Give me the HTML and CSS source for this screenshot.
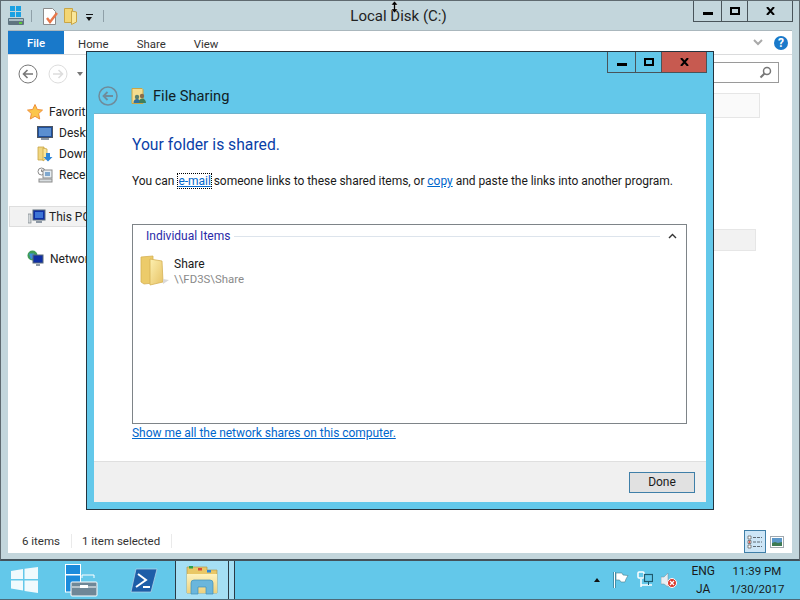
FILE: index.html
```html
<!DOCTYPE html>
<html lang="en">
<head>
  <meta charset="UTF-8">
  <title>File Sharing</title>
  <link rel="stylesheet" href="styles.css">
</head>
<body>

<svg class="defs" width="0" height="0">
  <defs>
    <linearGradient id="fold" x1="0" y1="0" x2="1" y2="1">
      <stop offset="0" stop-color="#fdf0b0"/>
      <stop offset="1" stop-color="#e6c265"/>
    </linearGradient>
    <linearGradient id="tile" x1="0" y1="0" x2="0" y2="1">
      <stop offset="0" stop-color="#fdf2bd"/>
      <stop offset="1" stop-color="#eed27e"/>
    </linearGradient>
  </defs>
</svg>

<div class="desktop">

  <div class="explorer">
    <div class="titlebar">
      <div class="qat">
        <svg class="qat-drive" width="18" height="20" viewBox="0 0 18 20">
          <rect x="3" y="0" width="5" height="5" fill="#1ba1e2"/><rect x="9" y="0" width="5" height="5" fill="#1ba1e2"/>
          <rect x="3" y="6" width="5" height="5" fill="#1ba1e2"/><rect x="9" y="6" width="5" height="5" fill="#1ba1e2"/>
          <rect x="1" y="12" width="16" height="7" rx="1" fill="#5f7480"/><rect x="2" y="13" width="14" height="2" fill="#a9bcc5"/>
          <rect x="12" y="16" width="3" height="2" fill="#5ecb3c"/>
        </svg>
        <span class="qat-sep"></span>
        <svg class="qat-props" width="16" height="17" viewBox="0 0 16 17">
          <path d="M1.500.5h9l3 3v13h-12z" fill="#fff" stroke="#8b8b8b"/>
          <path d="M5 10l3 4 7-9" fill="none" stroke="#e8774a" stroke-width="2.400"/>
        </svg>
        <svg class="qat-folder" width="14" height="17" viewBox="0 0 14 17">
          <path d="M.5.5h8v14h-8z" fill="#f3d675" stroke="#c9a545"/>
          <path d="M7.500 3l5 1v10l-5 2.500z" fill="#f9e69a" stroke="#c9a545"/>
        </svg>
        <span class="qat-menu"></span>
        <span class="qat-sep qat-sep-end"></span>
      </div>
      <div class="title">Local Disk (C:)</div>
      <div class="caption caption-main">
        <span class="cap-btn cap-min"><i></i></span>
        <span class="cap-btn cap-max"><i></i></span>
        <span class="cap-btn cap-close"><svg width="9" height="8" viewBox="0 0 9 8"><path d="M1 0l7 8M8 0L1 8" stroke="#000" stroke-width="2"/></svg></span>
      </div>
    </div>

    <div class="pane">
      <div class="ribbon">
        <span class="tab tab-file">File</span>
        <span class="tab tab-home">Home</span>
        <span class="tab tab-share">Share</span>
        <span class="tab tab-view">View</span>
        <span class="ribbon-end">
          <svg width="10" height="7" viewBox="0 0 10 7"><path d="M1 1l4 4 4-4" fill="none" stroke="#a9a9a9" stroke-width="2"/></svg>
          <span class="help">?</span>
        </span>
      </div>

      <div class="addressrow">
        <svg width="20" height="20" viewBox="0 0 20 20"><circle cx="10" cy="10" r="9" fill="#fff" stroke="#777"/><path d="M15 10H6M9.500 6L5.500 10l4 4" fill="none" stroke="#777" stroke-width="1.600"/></svg>
        <svg class="nav-forward" width="20" height="20" viewBox="0 0 20 20"><circle cx="10" cy="10" r="9" fill="#fff" stroke="#ddd"/><path d="M5 10h9M10.500 6l4 4-4 4" fill="none" stroke="#ddd" stroke-width="1.600"/></svg>
        <span class="nav-drop"></span>
        <span class="searchbox">
          <svg width="13" height="13" viewBox="0 0 13 13"><circle cx="8" cy="5" r="3.500" fill="none" stroke="#777" stroke-width="1.500"/><path d="M5.500 7.500L1.500 11.500" stroke="#777" stroke-width="2"/></svg>
        </span>
      </div>

      <div class="body">
        <div class="nav">
          <div class="nav-item nav-fav">
            <svg width="16" height="16" viewBox="0 0 16 16"><path d="M8 .5l2.300 5 5.200.6-3.900 3.500 1.100 5.400L8 12.300 3.300 15l1.100-5.400L.5 6.100l5.200-.6z" fill="#fbc64b" stroke="#ef8f3a"/></svg>
            <span>Favorit</span>
          </div>
          <div class="nav-item nav-sub">
            <svg width="16" height="14" viewBox="0 0 16 14"><rect x=".5" y=".5" width="15" height="11" fill="#1f4f9c" stroke="#4b5563"/><rect x="2" y="2" width="12" height="8" fill="#5b8fd0"/><rect x="4" y="12" width="8" height="2" fill="#8d98a5"/></svg>
            <span>Deskt</span>
          </div>
          <div class="nav-item nav-sub">
            <svg width="16" height="16" viewBox="0 0 16 16"><path d="M1 1h6v13H1z" fill="#f0d680" stroke="#c9a545" stroke-width=".8"/><path d="M6 2l4 1v9l-4 3z" fill="#f9e69a" stroke="#c9a545" stroke-width=".8"/><path d="M9 7h4v4h2.500L11 15.500 6.500 11H9z" fill="#2d86d8"/></svg>
            <span>Down</span>
          </div>
          <div class="nav-item nav-sub">
            <svg width="16" height="16" viewBox="0 0 16 16"><circle cx="4.500" cy="4.500" r="3.500" fill="#fff" stroke="#8b8b8b"/><path d="M4.500 2.500v2h2" fill="none" stroke="#666" stroke-width=".8"/><rect x="6" y="3" width="9" height="8" fill="#e6edf2" stroke="#8b8b8b"/><rect x="8" y="5" width="5" height="4" fill="#7fa8cf"/><rect x="2" y="12" width="13" height="3" fill="#d8dde0" stroke="#8b8b8b"/></svg>
            <span>Recer</span>
          </div>
          <div class="nav-item nav-pc">
            <svg width="18" height="16" viewBox="0 0 18 16"><rect x="0" y="5" width="3" height="9" fill="#d4d8da" stroke="#7d868c" stroke-width=".7"/><rect x="5" y="1" width="12" height="10" fill="#0f2fa5" stroke="#5a6a78"/><rect x="7" y="3" width="8" height="6" fill="#3d74d6"/><rect x="8" y="12" width="6" height="2" fill="#8d98a5"/></svg>
            <span>This PC</span>
          </div>
          <div class="nav-item nav-net">
            <svg width="17" height="17" viewBox="0 0 17 17"><circle cx="5.500" cy="5.500" r="5" fill="#3f9c57"/><path d="M2 3.500h5l1 3-4 3z" fill="#3d8fd8"/><rect x="6" y="5" width="10" height="8" fill="#0f2fa5" stroke="#5a6a78"/><rect x="9" y="14" width="4" height="2" fill="#8d98a5"/></svg>
            <span>Networ</span>
          </div>
        </div>
        <div class="ghosts">
          <span class="ghost ghost-top"></span>
          <span class="ghost ghost-row"></span>
        </div>
      </div>

      <div class="statusbar">
        <span class="status-cell">6 items</span>
        <span class="status-cell">1 item selected</span>
        <span class="viewbtns">
          <span class="viewbtn viewbtn-on">
            <svg width="16" height="14" viewBox="0 0 16 14"><path d="M1 1h3v3H1zM1 5.500h3v3H1zM1 10h3v3H1z" fill="#fff" stroke="#555" stroke-width=".7"/><rect x="1.700" y="6.200" width="1.600" height="1.600" fill="#d9362a"/><path d="M6 2.500h9M6 7h9M6 11.500h9" stroke="#5f6b75" stroke-dasharray="3 1"/></svg>
          </span>
          <span class="viewbtn viewbtn-thumb">
            <svg width="14" height="12" viewBox="0 0 14 12"><rect x=".5" y=".5" width="13" height="11" fill="#fff" stroke="#a0a8ae"/><rect x="2" y="2" width="10" height="8" fill="#5b97c9"/><path d="M2 10V7l3-1 3 1 4-1v4z" fill="#3d7a52"/></svg>
          </span>
        </span>
      </div>
    </div>
  </div>

  <div class="dialog">
    <div class="caption caption-dialog">
      <span class="cap-btn cap-min"><i></i></span>
      <span class="cap-btn cap-max"><i></i></span>
      <span class="cap-btn cap-close cap-red"><svg width="9" height="8" viewBox="0 0 9 8"><path d="M1 0l7 8M8 0L1 8" stroke="#000" stroke-width="2"/></svg></span>
    </div>
    <div class="dialog-head">
      <svg width="20" height="20" viewBox="0 0 20 20"><circle cx="10" cy="10" r="9" fill="none" stroke="#6f8c9b" stroke-width="1.500"/><path d="M15 10H6M9.500 6L5.500 10l4 4" fill="none" stroke="#6f8c9b" stroke-width="1.800"/></svg>
      <svg class="share-icon" width="16" height="16" viewBox="0 0 16 16">
        <path d="M1 .5h10l1 1v14H1z" fill="#f4dc8f" stroke="#c9a545"/>
        <circle cx="6" cy="9" r="2.200" fill="#5b7f6e"/><path d="M2.500 15c0-3 1.500-4 3.500-4s3.500 1 3.500 4z" fill="#2f6f9f"/>
        <circle cx="11" cy="8" r="2.200" fill="#8a6d4b"/><path d="M8 15c0-3 1-4.500 3-4.500s4 1.500 4 4.500z" fill="#3c7f5f"/>
      </svg>
      <span class="dialog-title">File Sharing</span>
    </div>
    <div class="dialog-body">
      <div class="dialog-main">
        <h1 class="heading">Your folder is shared.</h1>
        <p class="intro">You can <a class="link link-focus">e-mail</a> someone links to these shared items, or <a class="link">copy</a> and paste the links into another program.</p>
        <div class="itembox">
          <div class="group-head">
            <span class="group-label">Individual Items</span>
            <span class="group-line"></span>
            <svg width="9" height="6" viewBox="0 0 9 6"><path d="M1 5l3.500-3.500L8 5" fill="none" stroke="#333" stroke-width="1.400"/></svg>
          </div>
          <div class="item">
            <svg width="32" height="32" viewBox="0 0 32 32">
              <path d="M1 2l12-1v27l-9 1-3-2z" fill="#eccb6a" stroke="#d6b154" stroke-width=".8"/>
              <path d="M10 4l12 2 1 21-13 3z" fill="url(#fold)" stroke="#d6b154" stroke-width=".8"/>
              <path d="M23 24l6 1-6 4z" fill="#d9d9d9"/>
            </svg>
            <div class="item-text">
              <div class="item-name">Share</div>
              <div class="item-path">\\FD3S\Share</div>
            </div>
          </div>
        </div>
        <a class="link link-shares">Show me all the network shares on this computer.</a>
      </div>
      <div class="dialog-foot">
        <button class="done" type="button">Done</button>
      </div>
    </div>
  </div>

  <div class="taskbar">
    <svg class="start" width="28" height="26" viewBox="0 0 28 26">
      <path d="M0 4l12-2v10H0zM13.500 1.800L27 0v12H13.500zM0 13.500h12v10l-12-2zM13.500 13.500H27V26l-13.500-2z" fill="#fff" opacity=".9"/>
    </svg>
    <svg class="task-server" width="33" height="33" viewBox="0 0 33 33">
      <rect x=".5" y=".5" width="15" height="10" fill="#1b8bdc" stroke="#fff"/>
      <rect x=".5" y="11" width="15" height="17" fill="#1b8bdc" stroke="#fff"/>
      <path d="M17 14v-3h12v3" fill="none" stroke="#fff"/>
      <rect x="6" y="18" width="26" height="14" rx="1" fill="#6f8797" stroke="#fff"/>
      <path d="M7 23h24" stroke="#fff"/><rect x="15" y="21" width="8" height="3" fill="#fff"/>
    </svg>
    <svg class="task-ps" width="28" height="25" viewBox="0 0 28 25">
      <path d="M6 1h21l-6 23H1z" fill="#1d5ea8" stroke="#bcd6ea" stroke-width=".7"/>
      <path d="M8 6l8 6-10 7M13 19h7" fill="none" stroke="#fff" stroke-width="2"/>
    </svg>
    <span class="task-active">
      <svg width="32" height="30" viewBox="0 0 32 30">
        <path d="M1 5V2h20v3h10v23H1z" fill="#e9c866" stroke="#b39a4d" stroke-width=".7"/>
        <rect x="3" y="1" width="4" height="2.500" fill="#2aa34a"/><rect x="12" y="3" width="4" height="2.500" fill="#d84a3a"/><rect x="21" y="5" width="4" height="2.500" fill="#2d86d8"/>
        <path d="M1 9h30v19H1z" fill="url(#tile)"/>
        <path d="M5 29V18q0-3 3-3h16q3 0 3 3v11h-7v-7h-8v7z" fill="#6ab6dc" stroke="#3f8fb8" stroke-width=".7"/>
      </svg>
    </span>
    <span class="task-stack"></span>
    <div class="tray">
      <span class="tray-up"></span>
      <svg width="16" height="18" viewBox="0 0 16 18"><path d="M1.500 1v16" stroke="#1f5a6e" stroke-width="2"/><path d="M1.500 1v16" stroke="#fff"/><path d="M3 2h6l1 2 5 .5-2 3.500-1 3H8L6.500 9H3z" fill="#fff" stroke="#47808f" stroke-width=".6"/></svg>
      <svg width="16" height="18" viewBox="0 0 16 18"><rect x="1" y="1" width="6" height="6" rx="1" fill="none" stroke="#fff" stroke-width="1.500"/><path d="M4 8v8" stroke="#fff" stroke-width="1.500"/><rect x="7.500" y="3.500" width="8" height="7" fill="none" stroke="#1f5a6e" stroke-width="1.200"/><path d="M4 14h11" stroke="#fff" stroke-width="1.500"/><path d="M11.500 11v3" stroke="#1f5a6e"/></svg>
      <svg width="16" height="18" viewBox="0 0 16 18"><path d="M0 6h3l4-4v14l-4-3H0z" fill="#e8eef2" stroke="#7b8a94" stroke-width=".5"/><circle cx="11" cy="12" r="4.500" fill="#d9362a" stroke="#fff"/><path d="M9 10l4 4M13 10l-4 4" stroke="#fff" stroke-width="1.300"/></svg>
      <div class="lang"><span>ENG</span><span>JA</span></div>
      <div class="clock"><span>11:39 PM</span><span>1/30/2017</span></div>
    </div>
  </div>

</div>

<svg class="cursor" width="9" height="12" viewBox="0 0 9 12"><path d="M4.500 0L8 4H5.500v4H8l-3.500 4L1 8h2.500V4H1z" fill="#000" stroke="#fff" stroke-width=".5"/></svg>

</body>
</html>
```
FILE: styles.css
```css
html, body {
  margin: 0;
  padding: 0;
}
body {
  font-family: "Roboto", "Open Sans", sans-serif;
  font-size: 12px;
  color: #1a1a1a;
  width: 800px;
  height: 600px;
  overflow: hidden;
  position: relative;
}
.defs {
  position: absolute;
}
svg {
  display: block;
  flex: none;
}
.desktop {
  width: 800px;
  height: 600px;
  display: flex;
  flex-direction: column;
  background: #63c8ea;
  position: relative;
}

/* explorer window behind the dialog */
.explorer {
  height: 561px;
  flex: none;
  box-sizing: border-box;
  background: #c3d6dc;
  border: 1px solid #5f6a70;
  border-bottom: 2px solid #44525a;
  display: flex;
  flex-direction: column;
}
.titlebar {
  height: 29px;
  flex: none;
  display: flex;
  position: relative;
}
.qat {
  display: flex;
  align-items: center;
  height: 20px;
  padding: 5px 0 0 6px;
}
.qat-sep {
  width: 1px;
  height: 12px;
  background: #8fa0a8;
  margin-left: 6px;
}
.qat-props {
  margin-left: 10px;
}
.qat-folder {
  margin-left: 6px;
}
.qat-menu {
  width: 7px;
  height: 7px;
  box-sizing: border-box;
  border-top: 1px solid #111;
  position: relative;
  margin: 3px 0 0 8px;
}
.qat-menu::after {
  content: "";
  position: absolute;
  top: 2px;
  left: 0;
  border-style: solid;
  border-width: 4px 3.500px 0;
  border-color: #111 transparent transparent;
}
.qat-sep-end {
  margin-left: 10px;
}
.title {
  position: absolute;
  left: 0;
  right: 0;
  top: 6px;
  text-align: center;
  font-size: 15px;
  color: #222;
  padding-right: 3px;
}
.caption {
  position: absolute;
  display: flex;
  height: 21px;
  box-sizing: border-box;
  border: 1px solid #49545a;
  border-top: 0;
}
.caption-main {
  top: 0;
  right: 6px;
}
.cap-btn {
  display: flex;
  align-items: center;
  justify-content: center;
  border-right: 1px solid #49545a;
  width: 27px;
}
.cap-max {
  width: 25px;
}
.cap-close {
  width: 44px;
  border-right: 0;
}
.cap-min i {
  display: block;
  width: 10px;
  height: 3px;
  background: #000;
  margin-top: 5px;
}
.cap-max i {
  display: block;
  width: 6px;
  height: 4px;
  border: 2px solid #000;
  margin-top: -1px;
}
.cap-red {
  background: #c75a50;
}
.pane {
  flex: 1;
  min-height: 0;
  margin: 0 7px 6px;
  background: #fff;
  display: flex;
  flex-direction: column;
  border-top: 1px solid #aab7bd;
}
.ribbon {
  height: 23px;
  flex: none;
  display: flex;
  align-items: center;
  border-bottom: 1px solid #dadbdc;
  color: #333;
  font-size: 11.400px;
}
.tab-file {
  width: 56px;
  height: 23px;
  background: #1979ca;
  color: #fff;
  display: flex;
  align-items: center;
  justify-content: center;
  font-weight: 500;
}
.tab-home {
  margin-left: 14px;
  padding-top: 3px;
}
.tab-share {
  margin-left: 28px;
  padding-top: 3px;
}
.tab-view {
  margin-left: 28px;
  padding-top: 3px;
}
.ribbon-end {
  margin-left: auto;
  display: flex;
  align-items: center;
  gap: 11px;
  padding-right: 4px;
}
.help {
  width: 14px;
  height: 14px;
  border-radius: 50%;
  background: #1979ca;
  color: #fff;
  font-weight: 700;
  font-size: 12px;
  line-height: 14px;
  text-align: center;
}
.addressrow {
  height: 37px;
  flex: none;
  display: flex;
  align-items: center;
  padding-left: 10px;
}
.nav-forward {
  margin-left: 10px;
}
.nav-drop {
  width: 0;
  height: 0;
  border-style: solid;
  border-width: 4px 3.500px 0;
  border-color: #777 transparent transparent;
  margin-left: 9px;
}
.searchbox {
  margin-left: auto;
  margin-right: 13px;
  margin-top: -2px;
  width: 95px;
  height: 21px;
  box-sizing: border-box;
  border: 1px solid #9a9a9a;
  display: flex;
  align-items: center;
  justify-content: flex-end;
  padding-right: 6px;
}
.body {
  flex: 1;
  min-height: 0;
  display: flex;
  justify-content: space-between;
}
.nav {
  padding-top: 9px;
  color: #222;
}
.nav-item {
  display: flex;
  align-items: center;
  gap: 6px;
  height: 21px;
  white-space: nowrap;
}
.nav-fav {
  padding-left: 19px;
}
.nav-sub {
  padding-left: 29px;
}
.nav-pc {
  margin: 21px 0 0 1px;
  padding-left: 18px;
  width: 300px;
  gap: 3px;
  background: #f2f2f2;
  border: 1px solid #dedede;
  height: 19px;
}
.nav-net {
  margin-top: 21px;
  padding-left: 19px;
}
.ghosts {
  display: flex;
  flex-direction: column;
  align-items: flex-end;
  padding: 1px 32px 0 0;
}
.ghost {
  display: block;
  background: #fafafa;
  border: 1px solid #e6e6e6;
  box-sizing: border-box;
  width: 60px;
}
.ghost-top {
  height: 25px;
}
.ghost-row {
  height: 22px;
  margin: 111px 4px 0 0;
  background: #f2f2f2;
}
.statusbar {
  height: 23px;
  flex: none;
  display: flex;
  align-items: center;
  color: #333;
  font-size: 11.500px;
  padding-left: 14px;
}
.status-cell {
  padding-right: 11px;
  margin-right: 10px;
  margin-bottom: 2px;
  border-right: 1px solid #eaeaea;
}
.viewbtns {
  margin-left: auto;
  display: flex;
  align-items: center;
  margin-right: 8px;
}
.viewbtn {
  width: 22px;
  height: 23px;
  display: flex;
  align-items: center;
  justify-content: center;
  box-sizing: border-box;
}
.viewbtn-thumb {
  width: 18px;
  justify-content: flex-end;
}
.viewbtn-on {
  background: #cde6f7;
  border: 1px solid #3f7fa8;
}

/* file sharing dialog */
.dialog {
  position: absolute;
  left: 86px;
  top: 51px;
  width: 628px;
  height: 459px;
  box-sizing: border-box;
  background: #63c8ea;
  border: 1px solid #24343f;
  display: flex;
  flex-direction: column;
  padding: 0 7px 7px;
}
.caption-dialog {
  top: 0;
  right: 6px;
}
.dialog-head {
  height: 62px;
  flex: none;
  box-sizing: border-box;
  display: flex;
  align-items: center;
  padding: 26px 0 0 4px;
  border-bottom: 1px solid #6fb3cc;
}
.share-icon {
  margin-left: 13px;
}
.dialog-title {
  margin-left: 6px;
  font-size: 14.700px;
  color: #111d25;
}
.dialog-body {
  flex: 1;
  min-height: 0;
  background: #fff;
  display: flex;
  flex-direction: column;
}
.dialog-main {
  flex: 1;
  min-height: 0;
  padding: 20px 19px 0 38px;
  display: flex;
  flex-direction: column;
}
.heading {
  margin: 0;
  font-weight: 400;
  font-size: 15.700px;
  line-height: 21px;
  color: #0a3fa8;
}
.intro {
  margin: 18px 0 0;
  line-height: 16px;
  white-space: nowrap;
  letter-spacing: -0.035px;
  color: #1a1a1a;
}
.link {
  color: #0066cc;
  text-decoration: underline;
}
.link-focus {
  outline: 1px dotted #000;
  margin-left: 1px;
}
.itembox {
  margin-top: 35px;
  height: 200px;
  box-sizing: border-box;
  border: 1px solid #7e8488;
  padding: 0 8px 0 7px;
  flex: none;
}
.group-head {
  height: 22px;
  display: flex;
  align-items: center;
  padding-left: 6px;
  padding-right: 1px;
  gap: 4px;
}
.group-label {
  color: #2a2aa8;
}
.group-line {
  flex: 1;
  height: 1px;
  background: #dde4ec;
  margin-right: 4px;
}
.item {
  display: flex;
  align-items: center;
  gap: 2px;
  margin-top: 8px;
}
.item-text {
  line-height: 15px;
  padding-top: 1px;
}
.item-name {
  color: #1a1a1a;
}
.item-path {
  color: #8a8a8a;
  font-size: 11.400px;
}
.link-shares {
  margin-top: 1px;
  line-height: 16px;
  align-self: flex-start;
  letter-spacing: -0.030px;
}
.dialog-foot {
  height: 41px;
  flex: none;
  box-sizing: border-box;
  background: #f0f0f0;
  border-top: 1px solid #dfdfdf;
  display: flex;
  align-items: center;
  justify-content: flex-end;
  padding: 0 11px 0 0;
}
.done {
  width: 66px;
  height: 21px;
  padding: 0;
  background: #e1e1e1;
  border: 1px solid #3f7fa8;
  font-family: inherit;
  font-size: 12px;
  color: #1a1a1a;
}

/* taskbar */
.taskbar {
  flex: 1;
  display: flex;
  align-items: center;
  position: relative;
  padding-left: 11px;
  border-bottom: 1px solid #4d6a78;
}
.start {
  width: 28px;
}
.task-server {
  margin-left: 26px;
}
.task-ps {
  margin-left: 32px;
}
.task-active {
  margin-left: 17px;
  width: 54px;
  align-self: stretch;
  box-sizing: border-box;
  background: #a5dff4;
  border: 1px solid #2a3a45;
  border-width: 0 1px;
  display: flex;
  align-items: center;
  justify-content: center;
}
.task-stack {
  width: 5px;
  align-self: stretch;
  background: #a5dff4;
  border-right: 1px solid #2a3a45;
}
.tray {
  margin-left: auto;
  display: flex;
  align-items: center;
  gap: 8px;
  padding-right: 16px;
  color: #1a1a1a;
}
.tray-up {
  width: 0;
  height: 0;
  border-style: solid;
  border-width: 0 3.500px 4px;
  border-color: transparent transparent #111;
  margin-right: 5px;
}
.lang,
.clock {
  display: flex;
  flex-direction: column;
  align-items: center;
  line-height: 18px;
}
.lang {
  margin-left: 6px;
}
.clock {
  margin-left: 7px;
  width: 54px;
  font-size: 11.500px;
}

/* mouse pointer sits over the window edge */
.cursor {
  position: absolute;
  left: 390px;
  top: 1px;
}
```
